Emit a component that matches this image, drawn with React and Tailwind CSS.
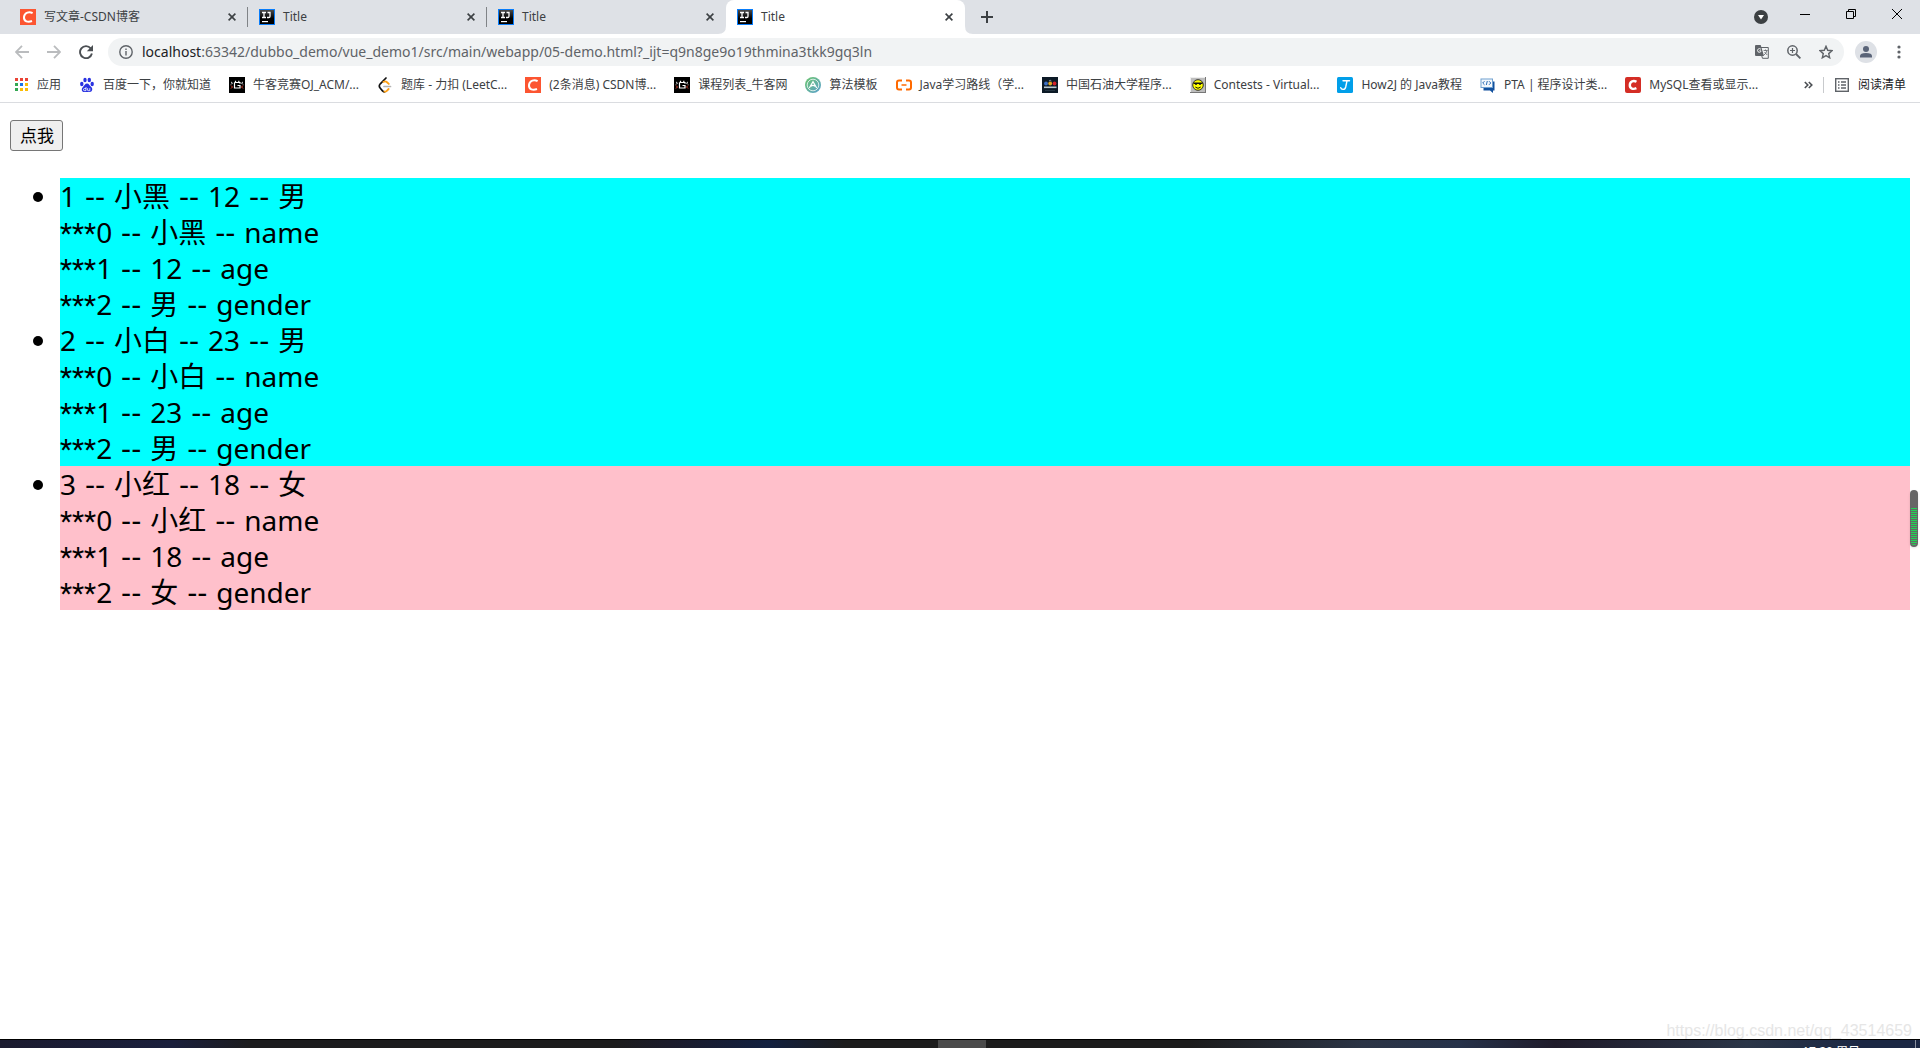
import React, { useState } from 'react';

const tabs = [
  { title: '写文章-CSDN博客', icon: 'csdn' },
  { title: 'Title', icon: 'idea' },
  { title: 'Title', icon: 'idea' },
  { title: 'Title', icon: 'idea' },
];

const bookmarks = [
  { label: '应用', icon: 'apps' },
  { label: '百度一下，你就知道', icon: 'baidu' },
  { label: '牛客竞赛OJ_ACM/...', icon: 'nowcoder' },
  { label: '题库 - 力扣 (LeetC...', icon: 'leetcode' },
  { label: '(2条消息) CSDN博...', icon: 'csdn' },
  { label: '课程列表_牛客网', icon: 'nowcoder' },
  { label: '算法模板', icon: 'template' },
  { label: 'Java学习路线（学...', icon: 'aliyun' },
  { label: '中国石油大学程序...', icon: 'upc' },
  { label: 'Contests - Virtual...', icon: 'smile' },
  { label: 'How2J 的 Java教程', icon: 'how2j' },
  { label: 'PTA | 程序设计类...', icon: 'pta' },
  { label: 'MySQL查看或显示...', icon: 'mysql' },
];

const people = [
  { id: 1, name: '小黑', age: 12, gender: '男' },
  { id: 2, name: '小白', age: 23, gender: '男' },
  { id: 3, name: '小红', age: 18, gender: '女' },
];

// Small 16px site icons used by the tabs and the bookmarks bar
const SiteIcon = ({ name }) => {
  const common = { width: 16, height: 16, viewBox: '0 0 16 16', className: 'shrink-0', 'aria-hidden': true };
  switch (name) {
    case 'csdn':
      return (
        <svg {...common}>
          <rect width="16" height="16" fill="#fc5531" />
          <path d="M12.600 4.200C9.400 2.400 4.600 3.200 4 8c-.4 4.600 4 5.600 8 4" fill="none" stroke="#fff" strokeWidth="2" />
        </svg>
      );
    case 'mysql':
      return (
        <svg {...common}>
          <rect width="16" height="16" rx="2" fill="#d42d25" />
          <path d="M11.500 4.800C8.500 3.200 5 4.200 4.800 8c-.1 3.900 3.600 4.600 6.600 3.200" fill="none" stroke="#fff" strokeWidth="2.400" />
        </svg>
      );
    case 'idea':
      return (
        <svg {...common}>
          <defs>
            <linearGradient id="ideaBg" x1="0" y1="0" x2="0" y2="1">
              <stop offset="0" stopColor="#4a4a4a" />
              <stop offset="0.600" stopColor="#000" />
            </linearGradient>
          </defs>
          <rect width="16" height="16" fill="#087cfa" />
          <rect x="1" y="1" width="14" height="14" fill="url(#ideaBg)" />
          <path d="M3 3.500h4M5 3.500v5M3 8.500h4M8.500 3.500h2.500v3.800q0 1.200-1.200 1.200H8" fill="none" stroke="#fff" strokeWidth="1.300" />
          <rect x="3" y="12" width="6" height="1.200" fill="#fff" />
        </svg>
      );
    case 'apps':
      return (
        <svg {...common}>
          <path fill="#ea4335" d="M2 1h3v3H2zM7 1h3v3H7zM12 1h3v3h-3z" />
          <path fill="#34a853" d="M2 6h3v3H2zM2 11h3v3H2z" />
          <path fill="#1a73e8" d="M7 6h3v3H7z" />
          <path fill="#fbbc04" d="M12 6h3v3h-3zM7 11h3v3H7zM12 11h3v3h-3z" />
        </svg>
      );
    case 'baidu':
      return (
        <svg {...common}>
          <g fill="#2932e1">
            <ellipse cx="2.800" cy="7" rx="1.700" ry="2.200" />
            <ellipse cx="6" cy="3" rx="1.700" ry="2.300" />
            <ellipse cx="10.300" cy="3" rx="1.700" ry="2.300" />
            <ellipse cx="13.200" cy="7" rx="1.700" ry="2.200" />
            <path d="M8 6.600c2 0 2.500 2 4 3.200 2.300 1.900 1.200 5.200-1.200 5.200H5.200C2.600 15 2 11.800 4 9.900 5.500 8.700 6 6.600 8 6.600z" />
          </g>
          <path d="M7 10v3.600H5.300q-.8 0-.8-1t.8-1H7M8.600 11.200v2q0 .5.6.5h1.600v-2.500" fill="none" stroke="#fff" strokeWidth=".8" />
        </svg>
      );
    case 'nowcoder':
      return (
        <svg {...common}>
          <rect width="16" height="16" fill="#000" />
          <path d="M5.500 5.500h5.500v1.200M5.500 5.500v5.500h5.500V8.500H8.500M6.500 5V3.800M9.800 5V3.800" fill="none" stroke="#fff" strokeWidth="1.200" />
          <path d="M2 5l1.500 1L2 7.500M14 5l-1.500 1L14 7.500" fill="none" stroke="#ddd" />
          <path d="M2 8.500L3.500 10 2 11.500M14 8.500L12.500 10l1.500 1.500" fill="none" stroke="#e5402c" />
        </svg>
      );
    case 'leetcode':
      return (
        <svg {...common}>
          <path d="M9 1L3.300 6.800q-2 2.200 0 4.400l2.200 2.600q1 1 2.200 1" fill="none" stroke="#111" strokeWidth="1.700" strokeLinecap="round" />
          <path d="M7.500 14.600q1.300.2 2.300-.8l1.800-1.800" fill="none" stroke="#ffa116" strokeWidth="1.900" strokeLinecap="round" />
          <path d="M6.500 4.800q1.900-1 3.500.4l1.800 1.700" fill="none" stroke="#ffa116" strokeWidth="1.900" strokeLinecap="round" />
          <path d="M7 9.500h6.500" stroke="#b3b3b3" strokeWidth="1.700" strokeLinecap="round" />
        </svg>
      );
    case 'template':
      return (
        <svg {...common}>
          <defs>
            <linearGradient id="tplBg" x1="0" y1="0" x2="1" y2="1">
              <stop offset="0" stopColor="#6cc66c" />
              <stop offset="1" stopColor="#5b9fd0" />
            </linearGradient>
          </defs>
          <circle cx="8" cy="8" r="8" fill="url(#tplBg)" />
          <circle cx="8" cy="8" r="5.800" fill="none" stroke="#e6f4ee" strokeWidth=".9" />
          <path d="M4.300 11L8 4.700l3.700 6.300M6 9.200q2-1.500 4 0" fill="none" stroke="#fff" strokeWidth="1.200" />
        </svg>
      );
    case 'aliyun':
      return (
        <svg {...common}>
          <path d="M6 3.500H3Q1 3.500 1 5.500v5q0 2 2 2h3M10 3.500h3q2 0 2 2v5q0 2-2 2h-3" fill="none" stroke="#ff6a00" strokeWidth="2" />
          <path d="M5.500 8h5" stroke="#ff6a00" strokeWidth="1.500" />
        </svg>
      );
    case 'upc':
      return (
        <svg {...common}>
          <rect width="16" height="16" fill="#0c1a26" />
          <circle cx="4" cy="6.500" r="1.900" fill="#3b6fc4" />
          <circle cx="8.200" cy="6.500" r="1.900" fill="#e0a820" />
          <circle cx="12.500" cy="6.500" r="1.900" fill="#d3222a" />
          <path d="M7 4q1.200-1.500 2.400 0" fill="none" stroke="#b9c0c6" strokeWidth=".7" />
          <rect x="2" y="9.500" width="12.500" height="1.600" fill="#b9c8ce" />
          <rect x="3" y="13" width="10" height="1" fill="#263642" />
        </svg>
      );
    case 'smile':
      return (
        <svg {...common}>
          <rect width="16" height="16" fill="#777" />
          <rect width="15" height="15" fill="#eee" />
          <rect x="1" y="1" width="14" height="14" fill="#bdbdbd" />
          <circle cx="8" cy="8" r="5.300" fill="#ff0" stroke="#222" strokeWidth=".9" />
          <path d="M3.500 6.300h9M5 7h2M9 7h2" stroke="#111" strokeWidth="1.400" />
          <path d="M5.300 10q2.700 2.600 5.400 0" fill="none" stroke="#111" />
        </svg>
      );
    case 'how2j':
      return (
        <svg {...common}>
          <rect width="16" height="16" rx="1.500" fill="#019fe9" />
          <path d="M6 3.800h6.500M10 3.800L8.700 10q-.6 2.500-2.700 2.400-2-.1-2.300-1.700" fill="none" stroke="#fff" strokeWidth="1.400" strokeLinecap="round" />
        </svg>
      );
    case 'pta':
      return (
        <svg {...common}>
          <path d="M3.500 4.500h11v9h-1.500V16l-3-2.500H3.500z" fill="#12519e" />
          <rect x="1" y="2" width="11.500" height="8.500" fill="#f4f8fc" stroke="#6fa0d0" />
          <path d="M4.500 4.200L2.700 6l1.800 1.800M9 4.200L10.800 6 9 7.800M7.300 4L6.300 8" fill="none" stroke="#2b6cb5" />
        </svg>
      );
    default:
      return null;
  }
};

const CloseIcon = () => (
  <svg width="8" height="8" viewBox="0 0 8 8" aria-hidden="true">
    <path d="M.6.6l6.800 6.800M7.400.6L.6 7.400" stroke="#3c4043" strokeWidth="1.600" />
  </svg>
);

const TabStrip = ({ active, onSelect }) => (
  <header className="flex h-[34px] items-stretch bg-[#dee1e6]">
    <div role="tablist" className="flex pl-[9px]">
      {tabs.map((tab, index) => {
        const isActive = index === active;
        return (
          <div
            key={index}
            className={
              isActive
                ? 'relative z-10 flex w-[239px] items-center rounded-t-lg bg-white'
                : 'relative flex w-[239px] items-center'
            }
          >
            {/* Outward curves at the foot of the active tab */}
            {isActive && (
              <>
                <svg className="absolute bottom-0 -left-2" width="8" height="8" aria-hidden="true">
                  <path d="M8 0v8H0q8 0 8-8z" fill="#fff" />
                </svg>
                <svg className="absolute -right-2 bottom-0" width="8" height="8" aria-hidden="true">
                  <path d="M0 0v8h8Q0 8 0 0z" fill="#fff" />
                </svg>
              </>
            )}
            <button
              type="button"
              role="tab"
              aria-selected={isActive}
              onClick={() => onSelect(index)}
              className="flex h-full flex-1 items-center gap-2 pl-[11px] text-xs text-[#3c4043]"
            >
              <SiteIcon name={tab.icon} />
              {tab.title}
            </button>
            <button type="button" aria-label="关闭" className="mr-[11px]">
              <CloseIcon />
            </button>
            {!isActive && index + 1 !== active && <span className="h-5 w-px bg-[#808387]" />}
            {(isActive || index + 1 === active) && <span className="w-px" />}
          </div>
        );
      })}
    </div>
    <button type="button" aria-label="新标签页" className="ml-4 flex items-center">
      <svg width="12" height="12" viewBox="0 0 12 12" aria-hidden="true">
        <path d="M6 0v12M0 6h12" stroke="#3c4043" strokeWidth="2" />
      </svg>
    </button>
    {/* Window controls */}
    <div className="ml-auto flex h-7 items-center pr-[18px]">
      <button type="button" aria-label="搜索标签页" className="mt-1.5 mr-8">
        <svg width="14" height="14" viewBox="0 0 14 14" aria-hidden="true">
          <circle cx="7" cy="7" r="7" fill="#3c4043" />
          <path d="M4 5h6l-3 4.500z" fill="#fff" />
        </svg>
      </button>
      <button type="button" aria-label="最小化" className="mr-9">
        <svg width="10" height="10" viewBox="0 0 10 10" aria-hidden="true">
          <path d="M0 5.500h10" stroke="#000" />
        </svg>
      </button>
      <button type="button" aria-label="还原" className="mr-9">
        <svg width="10" height="10" viewBox="0 0 10 10" aria-hidden="true">
          <path d="M.5 2.500h7v7h-7zM2.500 2.500v-2h7v7h-2" fill="none" stroke="#000" />
        </svg>
      </button>
      <button type="button" aria-label="关闭窗口">
        <svg width="10" height="10" viewBox="0 0 10 10" aria-hidden="true">
          <path d="M0 0l10 10M10 0L0 10" stroke="#000" />
        </svg>
      </button>
    </div>
  </header>
);

const Toolbar = () => (
  <div className="flex h-9 items-center bg-white pr-[19px] pl-[15px]">
    <button type="button" aria-label="后退" className="mr-[18px]">
      <svg width="14" height="14" viewBox="0 0 14 14" fill="none" stroke="#babcbe" strokeWidth="1.800" aria-hidden="true">
        <path d="M14 7H1.500M7 .8L.9 7 7 13.200" />
      </svg>
    </button>
    <button type="button" aria-label="前进" className="mr-[18px]">
      <svg width="14" height="14" viewBox="0 0 14 14" fill="none" stroke="#babcbe" strokeWidth="1.800" aria-hidden="true">
        <path d="M0 7h12.500M7 .8L13.100 7 7 13.200" />
      </svg>
    </button>
    <button type="button" aria-label="重新加载" className="mr-[15px]">
      <svg width="14" height="14" viewBox="0 0 14 14" aria-hidden="true">
        <path d="M11.700 3.300A6 6 0 1 0 12.900 8.500" fill="none" stroke="#4b4f53" strokeWidth="1.900" />
        <path d="M14 0v6.200H7.800z" fill="#4b4f53" />
      </svg>
    </button>
    <div className="flex h-7 flex-1 items-center rounded-full bg-[#f1f3f4] pr-[11px] pl-[11px]">
      <svg width="14" height="14" viewBox="0 0 14 14" className="mr-[9px] shrink-0" aria-hidden="true">
        <circle cx="7" cy="7" r="6.200" fill="none" stroke="#5f6368" strokeWidth="1.400" />
        <path d="M6.300 3.400h1.400v1.500H6.300zM6.300 6h1.400v4.600H6.300z" fill="#5f6368" />
      </svg>
      <a href="#url" className="flex-1 text-sm whitespace-nowrap text-[#5f6368]">
        <span className="text-[#202124]">localhost</span>
        :63342/dubbo_demo/vue_demo1/src/main/webapp/05-demo.html?_ijt=q9n8ge9o19thmina3tkk9gq3ln
      </a>
      <div className="flex items-center gap-[18px]">
        <button type="button" aria-label="翻译此页">
          <svg width="14" height="14" viewBox="0 0 14 14" aria-hidden="true">
            <path d="M6 2.500h7.300v10.800H7.500L6.500 10" fill="none" stroke="#5f6368" />
            <path d="M0 1q0-1 1-1h4.700L9 11H1q-1 0-1-1z" fill="#5f6368" />
            <path d="M6 4.300q-1.300-1.300-2.700-.4-1.500 1.300-.3 2.900 1.500 1.200 2.900-.2V5.800H4.400" fill="none" stroke="#f1f3f4" />
            <path d="M8.600 5.500h4M10.500 4.500v1M12 5.500q-.8 3-3 4.500M9.500 7l2.700 3" fill="none" stroke="#5f6368" strokeWidth=".8" />
          </svg>
        </button>
        <button type="button" aria-label="缩放">
          <svg width="14" height="14" viewBox="0 0 14 14" fill="none" stroke="#5f6368" aria-hidden="true">
            <circle cx="5.500" cy="5.500" r="4.700" strokeWidth="1.500" />
            <path d="M9 9l4.400 4.400" strokeWidth="1.800" />
            <path d="M5.500 3v5M3 5.500h5" strokeWidth="1.200" />
          </svg>
        </button>
        <button type="button" aria-label="为此标签页添加书签">
          <svg width="14" height="14" viewBox="0 0 14 14" aria-hidden="true">
            <path d="M7 1.300l1.700 4 4.300.4-3.300 2.900 1 4.200L7 10.600l-3.700 2.200 1-4.200L1 5.700l4.300-.4z" fill="none" stroke="#5f6368" strokeWidth="1.400" />
          </svg>
        </button>
      </div>
    </div>
    <button type="button" aria-label="个人资料" className="ml-[11px]">
      <svg width="22" height="22" viewBox="0 0 22 22" aria-hidden="true">
        <circle cx="11" cy="11" r="11" fill="#dee1e6" />
        <circle cx="11" cy="8" r="3" fill="#5a6478" />
        <path d="M5 16.500v-1.500q0-3 6-3t6 3v1.500z" fill="#5a6478" />
      </svg>
    </button>
    <button type="button" aria-label="菜单" className="ml-5">
      <svg width="4" height="14" viewBox="0 0 4 14" fill="#5f6368" aria-hidden="true">
        <circle cx="2" cy="2" r="1.600" />
        <circle cx="2" cy="7" r="1.600" />
        <circle cx="2" cy="12" r="1.600" />
      </svg>
    </button>
  </div>
);

const BookmarksBar = () => (
  <nav className="flex h-[33px] border-b border-[#dadce0] bg-white pr-[14px] pb-0.5 pl-[13px] text-xs text-[#3c4043]">
    <div className="flex items-center gap-[18px]">
      {bookmarks.map((item, index) => (
        <a key={index} href="#bookmark" className="flex items-center gap-2 whitespace-nowrap">
          <SiteIcon name={item.icon} />
          {item.label}
        </a>
      ))}
    </div>
    <div className="ml-auto flex items-center">
      <button type="button" aria-label="更多书签" className="mr-2.5">
        <svg width="9" height="8" viewBox="0 0 9 8" fill="none" stroke="#4b4f53" strokeWidth="1.600" aria-hidden="true">
          <path d="M.8 1l3 3-3 3M4.800 1l3 3-3 3" />
        </svg>
      </button>
      <span className="mr-[11px] h-4 w-px bg-[#c8cacd]" />
      <button type="button" className="flex items-center gap-[9px] whitespace-nowrap text-[#202124]">
        <svg width="14" height="14" viewBox="0 0 14 14" fill="none" stroke="#5f6368" aria-hidden="true">
          <rect x=".7" y=".7" width="12.600" height="12.600" strokeWidth="1.400" />
          <path d="M3 4h1.500M3 7h1.500M3 10h1.500M6 4h5M6 7h5M6 10h5" strokeWidth="1.400" />
        </svg>
        阅读清单
      </button>
    </div>
  </nav>
);

const Dash = () => <span className="font-['DejaVu_Sans',sans-serif] leading-none">{' -- '}</span>;

const PersonItem = ({ person }) => {
  const fields = ['name', 'age', 'gender'];
  return (
    <li className={person.gender === '男' ? 'bg-[cyan]' : 'bg-[pink]'}>
      <div>
        {person.id}
        <Dash />
        {person.name}
        <Dash />
        {person.age}
        <Dash />
        {person.gender}
      </div>
      {fields.map((key, index) => (
        <div key={key}>
          <span className="font-[Roboto,sans-serif] leading-none">***</span>
          {index}
          <Dash />
          {person[key]}
          <Dash />
          {key}
        </div>
      ))}
    </li>
  );
};

// Floating level meter at the right edge of the window
const LevelMeter = () => (
  <div className="absolute top-[387px] right-0.5 flex h-[57px] w-2 flex-col justify-end rounded-full bg-[#666] px-px pb-0.5 shadow">
    <div className="h-[37px] rounded-b-full bg-[repeating-linear-gradient(to_bottom,#1fd655_0px,#1fd655_1px,#666_1px,#666_2px)]" />
  </div>
);

const Taskbar = () => (
  <footer className="relative flex h-[9px] justify-center overflow-hidden border-t border-black bg-[linear-gradient(to_right,#1b1b2f_0%,#1a1f3c_9%,#1c1c1e_13%,#1c1c1c_32%,#1b1b2b_35%,#12203f_40%,#1c1c1c_44%,#1c1c1c_62%,#2b3445_71%,#26324a_76%,#1f1b2a_81%,#2b3648_91%,#1b2744_97%)] pl-1">
    <span className="w-12 bg-[#4a4a4a]" />
    <time className="absolute top-1 right-[60px] text-xs leading-4 text-white">17:20 周日</time>
    <span className="absolute top-0 right-1 h-2 w-px bg-[#8a90a0]" />
  </footer>
);

const App = () => {
  const [active, setActive] = useState(3);
  const [visible, setVisible] = useState(true);

  return (
    <div className="flex min-h-screen flex-col bg-white font-['Noto_Sans','Noto_Sans_CJK_SC',sans-serif]">
      <TabStrip active={active} onSelect={setActive} />
      <Toolbar />
      <BookmarksBar />
      <main className="relative flex-1 px-2.5 pt-[17px] text-black">
        <button
          type="button"
          onClick={() => setVisible(!visible)}
          className="block rounded-[3px] border border-[#767676] bg-[#efefef] pr-2 pl-[9px] text-[17px] leading-[29px]"
        >
          点我
        </button>
        {visible && (
          <ul className="mt-[27px] list-disc pl-[50px] text-[28px] leading-9">
            {people.map((person) => (
              <PersonItem key={person.id} person={person} />
            ))}
          </ul>
        )}
        <LevelMeter />
        <p className="absolute right-2 bottom-0 font-['Liberation_Sans',sans-serif] text-base leading-4 text-[#e6e6e6]">
          https://blog.csdn.net/qq_43514659
        </p>
      </main>
      <Taskbar />
    </div>
  );
};

export default App;
